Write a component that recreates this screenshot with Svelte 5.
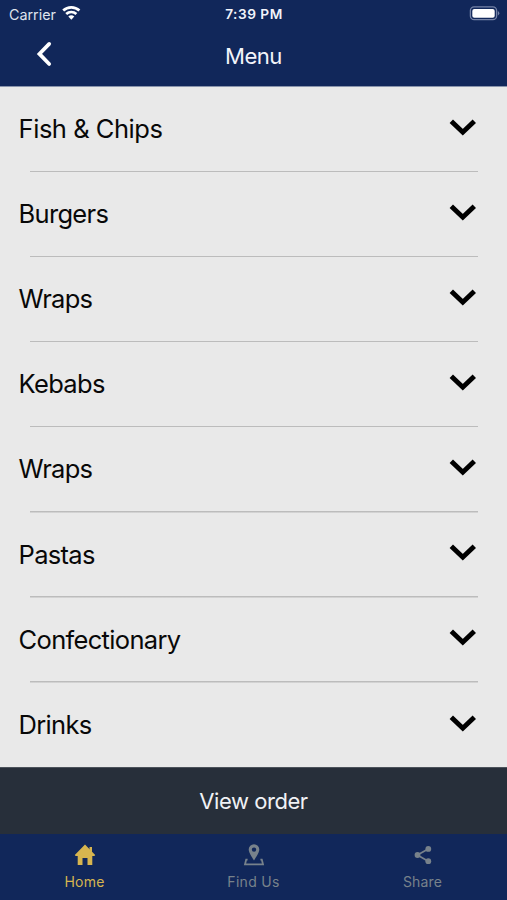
<script>
  const items = [
    { name: 'Fish & Chips', spacing: -0.47 },
    { name: 'Burgers', spacing: -0.7 },
    { name: 'Wraps', spacing: -0.7 },
    { name: 'Kebabs', spacing: -0.7 },
    { name: 'Wraps', spacing: -0.7 },
    { name: 'Pastas', spacing: -0.7 },
    { name: 'Confectionary', spacing: -0.68 },
    { name: 'Drinks', spacing: -0.7 }
  ];
</script>

<div class="screen">
  <header>
    <div class="status">
      <div class="carrier">
        <span>Carrier</span>
        <svg width="20" height="16" viewBox="0 0 20 16" fill="none" stroke="#fff" stroke-width="2.7">
          <path d="M1.2 5.6A11.8 11.8 0 0 1 17.4 5.6M4.2 9A7.5 7.5 0 0 1 14.4 9" />
          <path d="M6.3 11.6Q9.3 9 12.3 11.6L9.3 14.7Z" fill="#fff" stroke="none" />
        </svg>
      </div>
      <span class="time">7:39 PM</span>
      <svg class="battery" width="31" height="16" viewBox="0 0 31 16">
        <rect x="1.4" y="1.9" width="26.2" height="12.8" rx="3.7" fill="none" stroke="#7583a7" stroke-width="1.3" />
        <rect x="3.3" y="3.9" width="22.4" height="8.9" rx="2" fill="#fff" />
        <path d="M28.9 6Q31.7 8.2 28.9 10.5Z" fill="#7583a7" />
      </svg>
    </div>
    <div class="nav">
      <svg class="back" width="18" height="28" viewBox="0 0 18 28" fill="none" stroke="#fff" stroke-width="3.7" stroke-linecap="round">
        <path d="M14.2 3.9L4.4 13.9L14.2 24" />
      </svg>
      <h1>Menu</h1>
    </div>
  </header>

  <main>
    {#each items as item, i}
      <div class="row" class:last={i === items.length - 1}>
        <span style:letter-spacing="{item.spacing}px">{item.name}</span>
        <svg width="28" height="18" viewBox="0 0 28 18" fill="none" stroke="#000" stroke-width="4.9">
          <path d="M2.3 2.2L13.8 13.2L25.3 2.2" />
        </svg>
      </div>
    {/each}
  </main>

  <button class="order">View order</button>

  <nav class="tabs">
    <div class="tab active">
      <svg width="24" height="24" viewBox="0 0 24 24" fill="currentColor">
        <path d="M12 1.6L22.2 11.9L21.4 12.9H19.3V22H14.5V14.9H9.5V22H4.7V12.9H2.6L1.8 11.9L12 1.6Z" />
        <path d="M16.5 4.1H19V9.6L16.5 7Z" />
      </svg>
      <span class="home">Home</span>
    </div>
    <div class="tab">
      <svg width="24" height="24" viewBox="0 0 24 24">
        <path fill="currentColor" fill-rule="evenodd" d="M12 1.3A5.3 5.3 0 0 0 6.7 6.6C6.7 10.3 12 17.4 12 17.4S17.3 10.3 17.3 6.6A5.3 5.3 0 0 0 12 1.3ZM12 4.4A2.2 2.2 0 1 1 12 8.8A2.2 2.2 0 0 1 12 4.4Z" />
        <path fill="none" stroke="currentColor" stroke-width="1.8" d="M5.6 16.6H4.2L3 21.4H21L19.8 16.6H18.4" />
      </svg>
      <span class="find">Find Us</span>
    </div>
    <div class="tab">
      <svg width="24" height="24" viewBox="0 0 24 24" fill="currentColor">
        <path d="M17.2 5.9L6.4 12L17.2 18.2" fill="none" stroke="currentColor" stroke-width="1.7" />
        <circle cx="17.3" cy="5.9" r="2.9" />
        <circle cx="6.5" cy="12" r="2.9" />
        <circle cx="17.3" cy="18.2" r="2.9" />
      </svg>
      <span class="share">Share</span>
    </div>
  </nav>
</div>

<style>
  :global(body) { margin: 0; }
  .screen {
    width: 507px;
    height: 900px;
    display: flex;
    flex-direction: column;
    overflow: hidden;
    background: #e9e9e9;
    font-family: Inter, "Liberation Sans", sans-serif;
  }
  header {
    height: 86px;
    box-sizing: border-box;
    background: #11275a;
    color: #f2f4fa;
    flex: none;
  }
  .status {
    height: 28px;
    display: grid;
    grid-template-columns: 1fr auto 1fr;
    align-items: center;
    padding: 0 7px 0 9px;
    font-size: 14.3px;
  }
  .carrier { display: flex; align-items: center; gap: 6px; color: #dfe3ee; }
  .carrier svg { margin-top: -2px; }
  .time { font-size: 13.7px; font-weight: 600; letter-spacing: .5px; margin-left: -1px; }
  .battery { justify-self: end; margin-top: -2px; }
  .nav {
    height: 56px;
    display: grid;
    grid-template-columns: 1fr auto 1fr;
    align-items: center;
  }
  .back { margin: -4px 0 0 35px; }
  h1 { margin: 0; font-size: 22.1px; line-height: 56px; font-weight: 400; letter-spacing: -.55px; }
  main { height: 681px; flex: none; border-top: 1px solid #8994ac; box-sizing: border-box; }
  .row {
    height: 85.12px;
    box-sizing: border-box;
    display: flex;
    justify-content: space-between;
    align-items: center;
    padding: 0 30px 2px 18.6px;
    font-size: 25.5px;
    color: #080808;
    background: linear-gradient(#bcbcbc, #bcbcbc) 30px 100% / 448px 1.5px no-repeat;
  }
  .row.last { background: none; height: 84.1px; padding-bottom: 0; }
  .row svg { margin-top: -2px; }
  .order {
    height: 67px;
    flex: none;
    border: 0;
    border-top: 1px solid #4c535b;
    padding: 0;
    background: #272f3a;
    color: #f0f2f5;
    font: 22px/66px Inter, sans-serif;
    letter-spacing: -.45px;
  }
  .tabs { height: 66px; display: grid; grid-template-columns: repeat(3, 1fr); background: #11275a; }
  .tab {
    display: flex;
    flex-direction: column;
    align-items: center;
    padding-top: 9px;
    color: #78828b;
    font-size: 14px;
    line-height: 18px;
  }
  .tab span { margin-top: 6px; }
  .find { letter-spacing: .3px; }
  .home { letter-spacing: .2px; }
  .share { letter-spacing: .15px; }
  .active { color: #d7b54f; }
</style>
